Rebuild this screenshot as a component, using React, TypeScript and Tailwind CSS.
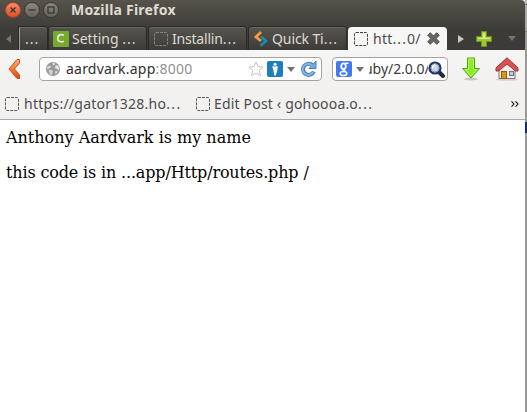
import type { ReactNode } from 'react';

function BlankIcon({ color }: { color: string }) {
  return (
    <svg className="h-[14px] w-[14px] shrink-0" viewBox="0 0 14 14" fill="none">
      <rect x=".5" y=".5" width="13" height="13" rx="1.5" stroke={color} strokeDasharray="3 1" />
    </svg>
  );
}

function Caret() {
  return (
    <svg className="h-[5px] w-[8px] shrink-0" viewBox="0 0 8 5">
      <path d="M0 0H8L4 5Z" fill="#74726f" />
    </svg>
  );
}

function WindowButton({ close, children }: { close?: boolean; children: ReactNode }) {
  const tone = close
    ? 'border-[#a94525] bg-linear-to-b from-[#f58a67] to-[#df4b20]'
    : 'border-[#3a3935] bg-linear-to-b from-[#8b887f] to-[#65635c]';
  return (
    <div className={`flex h-[16px] w-[16px] items-center justify-center rounded-full border ${tone}`}>
      <svg className="h-[10px] w-[10px]" viewBox="0 0 10 10" fill="none" stroke="#383630" strokeWidth="1.3">
        {children}
      </svg>
    </div>
  );
}

function Tab({ className, children }: { className: string; children: ReactNode }) {
  return (
    <div
      className={`flex h-[23px] items-center rounded-t-[3px] border-t border-[#6b6963] bg-linear-to-b from-[#55534e] to-[#3e3c38] text-[#dfdbd2] shadow-[0_0_0_1px_#2b2a27] ${className}`}
    >
      {children}
    </div>
  );
}

function Globe() {
  return (
    <svg className="h-[14px] w-[14px] shrink-0" viewBox="0 0 14 14">
      <circle cx="7" cy="7" r="7" fill="#999" />
      <path d="M.8 5.5L3 3.4 5 4.2 4.6 5.6 3.4 6.6 1.6 7.2ZM2.6 8L5 7.8 7 9 6.4 11 5.4 13.2 3.6 12 3.4 10Z" fill="#d6d6d6" />
      <path d="M6.6.8L9 1.2 8.4 3 7 3.4ZM9.6 3.4L12 3.6 13.2 6 12.4 8.4 10.8 6.8 9 6.2ZM9.4 9L11.6 9.4 10.4 11.6 9.2 12Z" fill="#e6e6e6" />
    </svg>
  );
}

function TitleBar() {
  return (
    <div className="flex h-[20px] items-center pl-[5px]">
      <div className="flex gap-[3px]">
        <WindowButton close><path d="M2.5 2.5L7.5 7.5M7.5 2.5L2.5 7.5" /></WindowButton>
        <WindowButton><path d="M1.5 5H8.5" /></WindowButton>
        <WindowButton><rect x="2" y="2" width="6" height="6" /></WindowButton>
      </div>
      <div className="ml-[12px] text-[14px] font-bold leading-[20px] tracking-[0.22px] text-[#dfdbd2]">Mozilla Firefox</div>
    </div>
  );
}

function TabStrip() {
  return (
    <div className="mt-[7px] flex h-[23px] text-[14px] leading-[22px]">
      <div className="flex w-[19px] items-center pl-[6px]">
        <svg className="h-[8px] w-[5px]" viewBox="0 0 5 8"><path d="M5 0V8L0 4Z" fill="#77756f" /></svg>
      </div>
      <Tab className="w-[28px] rounded-tl-none border-l border-l-[#a09e98] pl-[5px]"><span className="tracking-[1px]">...</span></Tab>
      <Tab className="ml-[2px] w-[97px] pl-[4px]">
        <svg className="h-[16px] w-[16px] shrink-0" viewBox="0 0 16 16">
          <rect width="16" height="16" rx="1" fill="#78a82e" />
          <path d="M11 4.2C7.8 2.7 4.7 4 4.7 7.2S8 11.7 11 10.2" fill="none" stroke="#e2edd0" strokeWidth="1.8" />
        </svg>
        <span className="ml-[3px] whitespace-nowrap">Setting <span className="tracking-[1px]">...</span></span>
      </Tab>
      <Tab className="ml-[3px] w-[97px] pl-[5px]">
        <BlankIcon color="#86847e" />
        <span className="ml-[4px] whitespace-nowrap tracking-[-0.2px]">Installin<span className="tracking-[1px]">...</span></span>
      </Tab>
      <Tab className="ml-[3px] w-[97px] pl-[5px]">
        <svg className="h-[16px] w-[14px] shrink-0" viewBox="0 0 14 16" fill="none" strokeWidth="2.8">
          <path d="M7 1L2 6 7 10" stroke="#f79a3a" />
          <path d="M7 5.5L12 10 6.5 14.8" stroke="#168cb2" />
        </svg>
        <span className="ml-[4px] whitespace-nowrap tracking-[-0.1px]">Quick Ti<span className="tracking-[1px]">...</span></span>
      </Tab>
      <div className="ml-[2px] flex h-[23px] w-[99px] items-center rounded-t-[4px] bg-[#f6f6f5] pl-[6px] text-[#4c4c4c]">
        <BlankIcon color="#464646" />
        <span className="ml-[5px] w-[54px] whitespace-nowrap tracking-[0.25px]">htt<span className="tracking-[1.1px]">...</span>0/</span>
        <svg className="h-[13px] w-[13px] shrink-0" viewBox="0 0 13 13">
          <path d="M3.3.7L6.5 3.9 9.7.7 12.3 3.3 9.1 6.5 12.3 9.7 9.7 12.3 6.5 9.1 3.3 12.3.7 9.7 3.9 6.5.7 3.3Z" fill="#666" stroke="#515151" />
        </svg>
      </div>
      <div className="flex h-[23px] items-center pl-[11px]">
        <svg className="h-[8px] w-[6px]" viewBox="0 0 6 8"><path d="M0 0V8L6 4Z" fill="#c8c6c2" /></svg>
        <svg className="ml-[12px] h-[16px] w-[16px]" viewBox="0 0 16 16">
          <path d="M5.5.5H10.5V5.5H15.5V10.5H10.5V15.5H5.5V10.5H.5V5.5H5.5Z" fill="#9fc52f" stroke="#6b9520" />
          <path d="M6.7 1.7H9.4V6.7H14.2V8H1.8V6.7H6.7Z" fill="#d8ea81" />
        </svg>
        <svg className="ml-[16px] h-[5px] w-[8px]" viewBox="0 0 8 5"><path d="M0 0H8L4 5Z" fill="#74726d" /></svg>
      </div>
    </div>
  );
}

function Navigation() {
  return (
    <div className="flex h-[38px] items-center bg-linear-to-b from-[#f5f5f4] to-[#f2f1f0] text-[14px]">
      <svg className="ml-[8px] h-[22px] w-[14px] shrink-0" viewBox="0 0 14 22">
        <defs><linearGradient id="back" x2="0" y2="1"><stop stopColor="#f8b080" /><stop offset=".5" stopColor="#f17b3a" /><stop offset="1" stopColor="#dd4814" /></linearGradient></defs>
        <path d="M9 1.5H11.5V5L6.5 11 11.5 17V20.5H9L1 11Z" fill="url(#back)" stroke="#c9521e" strokeLinejoin="round" />
      </svg>
      <div className="ml-[17px] flex h-[24px] w-[283px] shrink-0 items-center rounded-[4px] border border-[#a6a4a1] bg-white pl-[6px]">
        <Globe />
        <div className="ml-[6px] w-[182px] whitespace-nowrap leading-[22px] tracking-[0.22px] text-[#303030]">aardvark.app<span className="text-[#929292]">:8000</span></div>
        <svg className="h-[16px] w-[16px] shrink-0" viewBox="0 0 16 16">
          <path d="M8 1L10 5.7 15.2 6.1 11.2 9.5 12.5 14.7 8 12 3.5 14.7 4.8 9.5.8 6.1 6 5.7Z" fill="#fff" stroke="#c6c6c6" strokeLinejoin="round" />
        </svg>
        <svg className="ml-[3px] h-[16px] w-[16px] shrink-0" viewBox="0 0 16 16">
          <rect width="16" height="16" rx="2" fill="#207dbd" />
          <circle cx="8" cy="3.2" r="1.5" fill="#fff" />
          <path d="M5.2 5.2L7.4 5.2 8 6 8.7 5.2 10.8 5.2 10.2 10 8.8 14.5H7.2L6.4 9Z" fill="#fff" />
        </svg>
        <div className="ml-[4px] flex"><Caret /></div>
        <svg className="ml-[6px] h-[16px] w-[16px] shrink-0" viewBox="0 0 16 16" fill="none">
          <path d="M11.8 4.5A5.6 5.6 0 1 0 12.8 10.5" stroke="#477fba" strokeWidth="4" />
          <path d="M15 0V7.5H8Z" fill="#78a9db" stroke="#477fba" />
          <path d="M11.5 4.6A5.6 5.6 0 1 0 12.3 10.8" stroke="#83b4e3" strokeWidth="2" />
        </svg>
      </div>
      <div className="ml-[10px] flex h-[24px] w-[116px] shrink-0 items-center rounded-[4px] border border-[#a6a4a1] bg-white pl-[3px]">
        <div className="flex h-[16px] w-[16px] shrink-0 items-center justify-center rounded-[2px] bg-[#4279ed]">
          <svg className="h-[15px] w-[12px]" viewBox="0 0 12 15" fill="none" stroke="#fff">
            <ellipse cx="5.5" cy="4.2" rx="2.3" ry="2.8" strokeWidth="1.8" />
            <path d="M7 1.2H10.5M6.5 7L5.5 8.3 7.8 9.7" strokeWidth="1.4" />
            <ellipse cx="5.5" cy="11.5" rx="3.3" ry="2.1" strokeWidth="1.5" />
          </svg>
        </div>
        <div className="ml-[4px] flex"><Caret /></div>
        <div className="ml-[5px] h-[22px] w-[59px] shrink-0 overflow-hidden whitespace-nowrap leading-[22px] text-[#3c3c3c]"><span className="-ml-[5px] tracking-[-0.05px]">uby/2.0.0/</span></div>
        <svg className="h-[17px] w-[17px] shrink-0" viewBox="0 0 17 17">
          <path d="M10 10L15 15" stroke="#252a31" strokeWidth="4" strokeLinecap="round" />
          <circle cx="7" cy="7" r="5.5" fill="#b8ccdd" stroke="#24346f" strokeWidth="2.2" />
          <circle cx="7" cy="7" r="4" fill="#c7d7e4" stroke="#8496bd" />
          <path d="M4.5 7A3 3 0 0 1 7.5 4" fill="none" stroke="#fff" strokeWidth="1.5" />
        </svg>
      </div>
      <svg className="ml-[13px] h-[24px] w-[20px] shrink-0" viewBox="0 0 20 24">
        <ellipse cx="10" cy="22" rx="7" ry="1.5" fill="#c8c7c4" />
        <path d="M6.5 1H13.5V11.5H18.5L10 21 1.5 11.5H6.5Z" fill="#87ed20" stroke="#4ba414" strokeLinejoin="round" />
        <path d="M7.5 2H12.5V12.5H16L10 19.4 4 12.5H7.5Z" fill="none" stroke="#b8f760" />
      </svg>
      <svg className="ml-[14px] h-[24px] w-[24px] shrink-0" viewBox="0 0 24 24">
        <ellipse cx="12" cy="22.5" rx="11" ry="1.3" fill="#d4d2ce" />
        <path d="M4 11L12 4.5 20 11V21.5H4Z" fill="#eeeeec" stroke="#777" />
        <path d="M12 .8L23 10.8V14H20.5L12 7 3.5 14H1V10.8Z" fill="#d85355" stroke="#a92d32" strokeLinejoin="round" />
        <rect x="6.5" y="14.5" width="5" height="7" fill="#dd941a" stroke="#985e0d" />
        <rect x="14.5" y="14.5" width="4" height="4" fill="#b8cbdc" stroke="#6e7781" />
      </svg>
    </div>
  );
}

function Bookmarks() {
  return (
    <div className="flex h-[32px] items-center border-b border-[#aaa9a5] bg-[#f2f1f0] pl-[5px] text-[14px] leading-[20px] text-[#4c4c4c]">
      <BlankIcon color="#5c5c5c" />
      <div className="ml-[5px] w-[172px] whitespace-nowrap tracking-[0.26px]">https://gator1328.ho<span className="tracking-[1.4px]">...</span></div>
      <BlankIcon color="#5c5c5c" />
      <div className="ml-[4px] w-[297px] whitespace-nowrap tracking-[0.18px]">Edit Post ‹ gohoooa.o<span className="tracking-[1.4px]">...</span></div>
      <svg className="h-[6px] w-[8px]" viewBox="0 0 8 6" fill="none" stroke="#111" strokeWidth="1.1"><path d="M.5.3L3 3 .5 5.7M4.5.3L7 3 4.5 5.7" /></svg>
    </div>
  );
}

export default function App() {
  return (
    <div className="flex h-[412px] w-[527px] overflow-hidden bg-white font-['Noto_Sans',sans-serif]">
      <div className="flex w-[525px] shrink-0 flex-col">
        <header className="h-[50px] shrink-0 rounded-tr-[4px] bg-linear-to-b from-[#56534b] to-[#3c3b37] to-60%">
          <TitleBar />
          <TabStrip />
        </header>
        <Navigation />
        <Bookmarks />
        <main className="grow bg-white pl-[6px] pt-[8px] font-['DejaVu_Serif',serif] text-[16px] leading-[19px] text-black">
          <p>Anthony Aardvark is my name</p>
          <p className="mt-[16px] tracking-[-0.15px]">this code is in ...app/Http/routes.php /</p>
        </main>
      </div>
      <div className="flex w-[2px] flex-col bg-[#999999]">
        <div className="h-[4px] bg-[#b8b8b8]" />
        <div className="h-px bg-[#777]" />
        <div className="h-[26px] bg-[#a8a8a8]" />
        <div className="h-px bg-[#777]" />
        <div className="mt-[90px] h-[11px] bg-[#142d61]" />
      </div>
    </div>
  );
}
